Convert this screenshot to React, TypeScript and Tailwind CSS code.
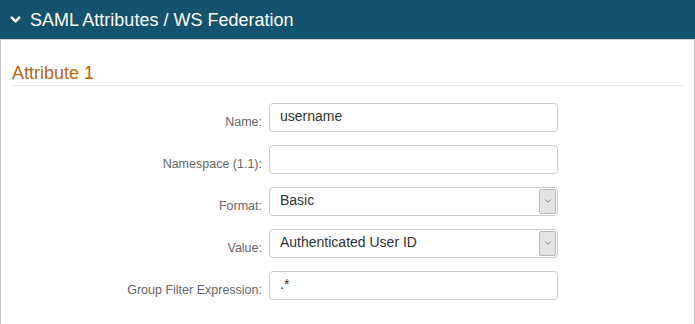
import { ChevronDown } from 'lucide-react';

const fields = [
  { label: 'Name:', value: 'username', kind: 'input' },
  { label: 'Namespace (1.1):', value: '', kind: 'input' },
  { label: 'Format:', value: 'Basic', kind: 'select' },
  { label: 'Value:', value: 'Authenticated User ID', kind: 'select' },
  { label: 'Group Filter Expression:', value: '.*', kind: 'input' },
];

function Field({ label, value, kind }: { label: string; value: string; kind: string }) {
  return (
    <div className="flex items-center h-[42px]">
      <div className="w-[257px] pr-[7px] pt-[10px] text-right text-[12.5px] text-[#666]">{label}</div>
      <div className="relative w-[289px] h-[29px] rounded-[4px] border border-[#ccc] bg-white flex items-center pl-[10px] text-[14px] text-[#333]">
        <span className="-mt-[1px]">{value}</span>
        {kind === 'select' && (
          <div className="absolute right-[1px] top-[1px] bottom-[1px] w-[17px] bg-[#e3e3e3] border border-[#b8b8b8] rounded-[2px] flex items-center justify-center">
            <ChevronDown size={10} strokeWidth={1.5} className="text-[#555]" />
          </div>
        )}
      </div>
    </div>
  );
}

export default function App() {
  return (
    <div className="w-[695px] h-[324px] bg-white overflow-hidden font-['Liberation_Sans',Arial,sans-serif]">
      {/* Panel header */}
      <div className="h-[40px] bg-[#14536e] border-b border-[#d0d0d0] flex items-center pl-[8px] text-white">
        <ChevronDown size={15} strokeWidth={4} className="mr-[7px]" />
        <span className="text-[18px] leading-none">SAML Attributes / WS Federation</span>
      </div>

      {/* Panel body */}
      <div className="h-[284px] border-l border-r border-[#c4c4c4] pl-[11px] pr-[10px]">
        <div className="pt-[23px] pb-[2px] border-b border-[#eaeaea] text-[18px] leading-[20px] text-[#b9650e]">
          Attribute 1
        </div>
        <div className="pt-[10px]">
          {fields.map((f) => (
            <Field key={f.label} {...f} />
          ))}
        </div>
      </div>
    </div>
  );
}
